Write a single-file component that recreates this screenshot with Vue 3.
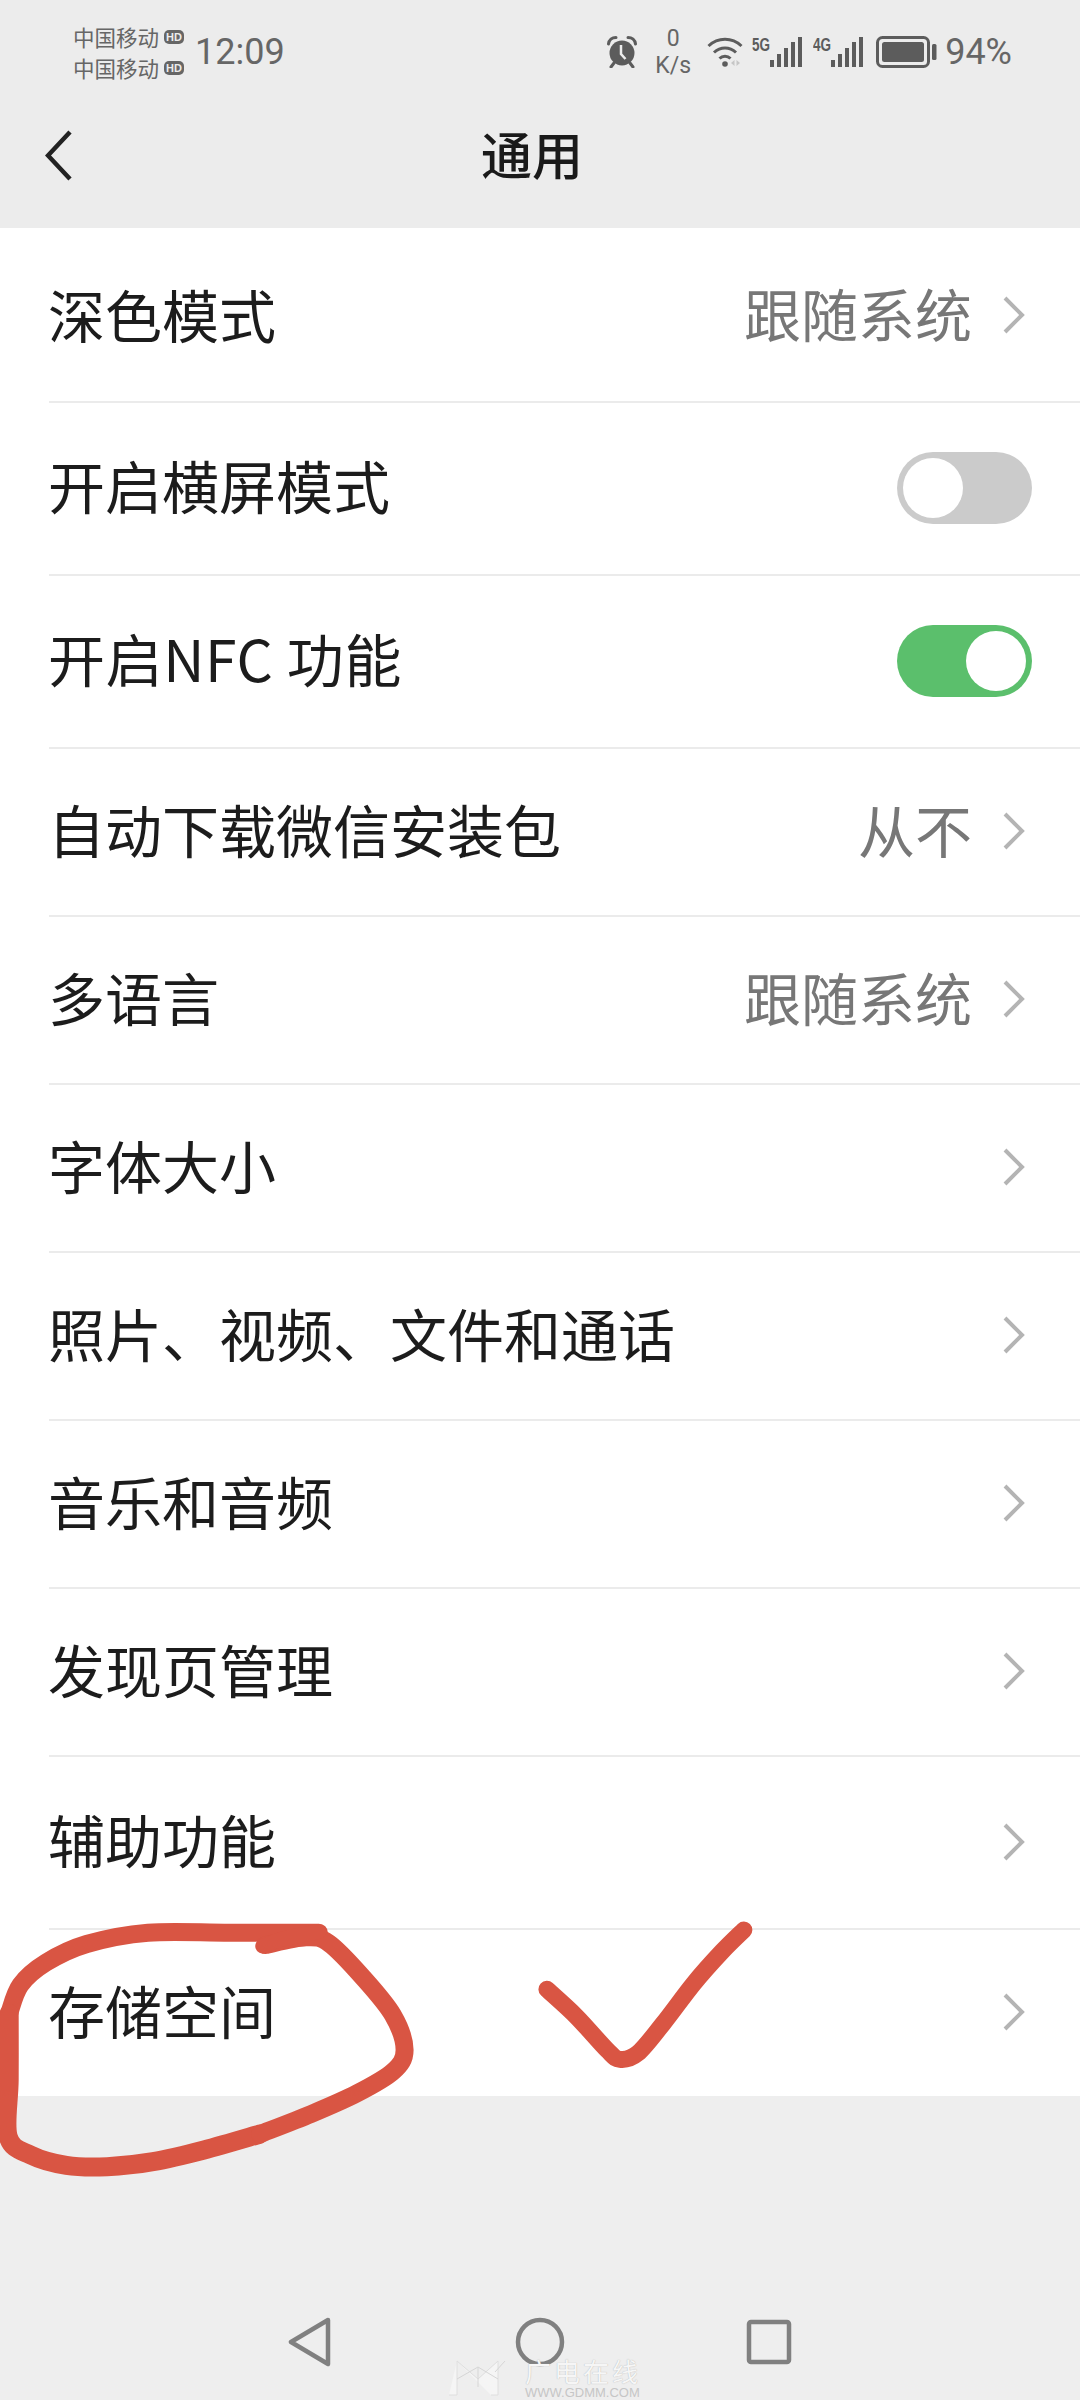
<script setup>
const rows = [
  { label: '深色模式', value: '跟随系统', arrow: true, size: 'tall' },
  { label: '开启横屏模式', toggle: 'off', size: 'tall' },
  { label: '开启NFC 功能', toggle: 'on', size: 'tall nfc' },
  { label: '自动下载微信安装包', value: '从不', arrow: true },
  { label: '多语言', value: '跟随系统', arrow: true },
  { label: '字体大小', arrow: true },
  { label: '照片、视频、文件和通话', arrow: true },
  { label: '音乐和音频', arrow: true },
  { label: '发现页管理', arrow: true },
  { label: '辅助功能', arrow: true, size: 'tall' },
  { label: '存储空间', arrow: true }
]

// Stroke points read off the reference crop, whose axes were scaled 1.96x and 3x.
const toPage = ([x, y]) => [x / 1.96, y / 3 + 1880]

function smooth(raw) {
  const pts = raw.map(toPage)
  let d = `M${pts[0][0]} ${pts[0][1]}`
  for (let i = 0; i < pts.length - 1; i++) {
    const p0 = pts[i - 1] || pts[i]
    const p1 = pts[i]
    const p2 = pts[i + 1]
    const p3 = pts[i + 2] || p2
    const c1x = p1[0] + (p2[0] - p0[0]) / 6
    const c1y = p1[1] + (p2[1] - p0[1]) / 6
    const c2x = p2[0] - (p3[0] - p1[0]) / 6
    const c2y = p2[1] - (p3[1] - p1[1]) / 6
    d += ` C${c1x} ${c1y} ${c2x} ${c2y} ${p2[0]} ${p2[1]}`
  }
  return d
}

const ringTop = smooth([[625, 158], [450, 158], [290, 158], [170, 192], [90, 248], [40, 315], [18, 400]])
const ringLeft = smooth([[18, 400], [18, 600], [16, 770], [60, 825], [130, 856], [210, 860], [300, 845], [400, 810], [510, 762]])
const ringRight = smooth([[510, 762], [610, 702], [700, 640], [770, 575], [793, 510], [770, 405], [710, 290], [645, 190], [600, 172], [520, 195]])
const ringBlob = smooth([[515, 198], [560, 175], [625, 155]])
const tick = smooth([[1072, 328], [1130, 410], [1190, 510], [1215, 538], [1250, 520], [1300, 430], [1360, 310], [1415, 215], [1458, 150]])
</script>

<template>
  <div class="page">
    <header class="head">
      <div class="status">
        <div class="carriers">
          <div class="carrier">中国移动<span class="hd">HD</span></div>
          <div class="carrier">中国移动<span class="hd">HD</span></div>
        </div>
        <div class="time">12:09</div>
        <div class="spacer"></div>
        <svg class="alarm" viewBox="0 0 30 32" width="30" height="32">
          <circle cx="15" cy="17" r="12.500" fill="#5c5c5c" />
          <path d="M1.500 8 C2 4 5 1.500 9 1.500 M28.500 8 C28 4 25 1.500 21 1.500" fill="none" stroke="#5c5c5c" stroke-width="3" stroke-linecap="round" />
          <path d="M7 27 L4 31 M23 27 L26 31" stroke="#5c5c5c" stroke-width="3" stroke-linecap="round" />
          <path d="M14 9 V18 L18.500 23" fill="none" stroke="#ececec" stroke-width="2.500" />
        </svg>
        <div class="speed"><span>0</span><span>K/s</span></div>
        <svg class="wifi" viewBox="0 0 38 32" width="38" height="32">
          <path d="M1.500 10 C11 1 25 1 34.500 10" fill="none" stroke="#5c5c5c" stroke-width="3" />
          <path d="M7 16.500 C13.500 10.500 22.500 10.500 29 16.500" fill="none" stroke="#5c5c5c" stroke-width="3" />
          <path d="M12.500 22.500 C15.500 19.500 20.500 19.500 23.500 22.500" fill="none" stroke="#5c5c5c" stroke-width="3" />
          <circle cx="18" cy="28" r="2.800" fill="#5c5c5c" />
          <path d="M27.500 24 L24 27 L27.500 30 Z M29.500 24 L33 27 L29.500 30 Z" fill="#c6c6c6" />
        </svg>
        <div class="net">
          <span class="gen">5G</span>
          <svg viewBox="0 0 33 32" width="33" height="32">
            <path d="M0 24 h4 v7 h-4 z M7 18 h4 v13 h-4 z M14 12 h4 v19 h-4 z M21 6 h4 v25 h-4 z M28 1 h4 v30 h-4 z" fill="#5c5c5c" />
          </svg>
        </div>
        <div class="net">
          <span class="gen">4G</span>
          <svg viewBox="0 0 33 32" width="33" height="32">
            <path d="M0 24 h4 v7 h-4 z M7 18 h4 v13 h-4 z M14 12 h4 v19 h-4 z M21 6 h4 v25 h-4 z M28 1 h4 v30 h-4 z" fill="#5c5c5c" />
          </svg>
        </div>
        <svg class="battery" viewBox="0 0 61 32" width="61" height="32">
          <rect x="1.500" y="1.500" width="51" height="29" rx="5" fill="none" stroke="#5c5c5c" stroke-width="3" />
          <rect x="6" y="6" width="42" height="20" rx="2.500" fill="#5c5c5c" />
          <rect x="56" y="8" width="4.500" height="16" rx="1.500" fill="#5c5c5c" />
        </svg>
        <div class="pct">94%</div>
      </div>
      <nav class="nav">
        <svg class="back" viewBox="0 0 30 56" width="30" height="56">
          <path d="M25 3 L3 26.500 L25 50" fill="none" stroke="#222" stroke-width="4.500" />
        </svg>
        <h1 class="title">通用</h1>
      </nav>
    </header>

    <main class="list">
      <div v-for="row in rows" :key="row.label" class="row" :class="row.size">
        <span class="label">{{ row.label }}</span>
        <span v-if="row.value" class="value">{{ row.value }}</span>
        <svg v-if="row.arrow" class="arrow" viewBox="0 0 24 40" width="24" height="40">
          <path d="M3 3 L20 20 L3 37" fill="none" stroke="#b4b4b4" stroke-width="4" />
        </svg>
        <span v-if="row.toggle" class="toggle" :class="row.toggle"><i class="knob"></i></span>
      </div>
    </main>

    <footer class="foot">
      <svg class="nav-back" viewBox="0 0 44 52" width="44" height="52">
        <path d="M40 4 L3 26 L40 48 Z" fill="none" stroke="#808080" stroke-width="4.500" stroke-linejoin="round" />
      </svg>
      <svg class="nav-home" viewBox="0 0 52 52" width="52" height="52">
        <circle cx="26" cy="26" r="22" fill="none" stroke="#808080" stroke-width="4.500" />
      </svg>
      <svg class="nav-recent" viewBox="0 0 48 52" width="48" height="52">
        <rect x="4" y="6" width="40" height="40" rx="2" fill="none" stroke="#808080" stroke-width="4.500" />
      </svg>
    </footer>

    <div class="mark">
      <svg class="mark-logo" viewBox="0 0 66 36" width="66" height="36">
        <path d="M14 1 L35 19 L55 1 V35 H48 M14 1 V35 H6" fill="#f5f5f5" stroke="#dedede" stroke-width="1" />
        <path d="M14 19 L35 7 L55 19 M35 7 V27 M62 1 L52 12" fill="none" stroke="#d6d6d6" stroke-width="1" />
      </svg>
      <div class="mark-text">
        <div class="mark-cn">广电在线</div>
        <div class="mark-en">WWW.GDMM.COM</div>
      </div>
    </div>

    <svg class="scribble" viewBox="0 0 1080 2400" width="1080" height="2400">
      <g fill="none" stroke="#d95543" stroke-linecap="round" stroke-linejoin="round">
        <path :d="ringTop" stroke-width="18" />
        <path :d="ringLeft" stroke-width="19" />
        <path :d="ringRight" stroke-width="18" />
        <path :d="ringBlob" stroke-width="15" />
        <path :d="tick" stroke-width="17" />
      </g>
    </svg>
  </div>
</template>

<style scoped>
.page {
  position: relative;
  width: 1080px;
  height: 2400px;
  overflow: hidden;
  background: #ececec;
  font-family: "Noto Sans CJK SC", "Noto Sans", sans-serif;
  display: flex;
  flex-direction: column;
}
.head { height: 228px; flex: none; }
.status {
  height: 84px;
  padding: 20px 68px 0 73px;
  box-sizing: border-box;
  display: flex;
  align-items: center;
  color: #5c5c5c;
}
.carriers { width: 122px; }
.carrier {
  font-size: 21.500px;
  line-height: 31px;
  display: flex;
  align-items: center;
  color: #666;
  white-space: nowrap;
}
.hd {
  margin-left: 5px;
  width: 20px;
  height: 14px;
  border-radius: 5px;
  background: #666;
  color: #ececec;
  font: 700 11px/14px "Liberation Sans", sans-serif;
  text-align: center;
}
.time {
  font: 400 36px/44px Roboto, sans-serif;
  color: #666;
}
.spacer { flex: 1; }
.speed {
  width: 38px;
  margin-left: 17px;
  display: flex;
  flex-direction: column;
  align-items: center;
  font: 400 23px/27px Roboto, sans-serif;
  color: #666;
}
.wifi { margin-left: 15px; }
.net { display: flex; align-items: flex-start; height: 32px; margin-left: 7px; }
.net + .net { margin-left: 10px; }
.gen {
  font: 700 18px/18px "Liberation Sans", sans-serif;
  width: 18px;
  transform: scaleX(.75);
  transform-origin: left;
  white-space: nowrap;
}
.battery { margin-left: 12px; }
.pct {
  margin-left: 8px;
  font: 400 36px/44px Roboto, sans-serif;
  color: #666;
}
.nav {
  position: relative;
  height: 144px;
  padding-right: 16px;
  display: flex;
  align-items: center;
  justify-content: center;
}
.back { position: absolute; left: 45px; top: 45px; }
.title {
  margin: 0 0 6px;
  font-size: 51px;
  font-weight: 500;
  line-height: 1;
  color: #1a1a1a;
}
.list { background: #fff; flex: none; }
.row {
  position: relative;
  display: flex;
  align-items: center;
  height: 168px;
  padding: 0 48px;
  box-sizing: border-box;
}
.row.tall { height: 173px; }
.row + .row::before {
  content: "";
  position: absolute;
  left: 49px;
  right: 0;
  top: 0;
  height: 2px;
  background: #ebebeb;
}
.label {
  flex: 1;
  margin-top: -6px;
  font-size: 57px;
  line-height: 1.2;
  color: #1c1c1c;
  white-space: nowrap;
}
.value {
  margin: -6px 30px 0 0;
  font-size: 57px;
  line-height: 1.2;
  color: #777;
  white-space: nowrap;
}
.row:first-child .label { margin-top: -2px; }
.row:first-child .value { margin-top: -4px; }
.nfc .label { letter-spacing: .6px; }
.arrow { flex: none; margin-right: 6px; }
.toggle {
  position: relative;
  width: 135px;
  height: 72px;
  border-radius: 36px;
  background: #cbcbcb;
  flex: none;
}
.toggle.on { background: #5bbf6c; }
.knob {
  position: absolute;
  top: 6px;
  left: 6px;
  width: 60px;
  height: 60px;
  border-radius: 50%;
  background: #fff;
}
.toggle.on .knob { left: 69px; }
.foot {
  flex: 1;
  display: flex;
  align-items: flex-start;
  padding: 220px 0 0 288px;
  background: #eee;
}
.nav-home { margin-left: 182px; }
.nav-recent { margin-left: 179px; }
.mark {
  position: absolute;
  left: 443px;
  top: 2356px;
  display: flex;
  gap: 16px;
}
.mark-logo { margin-top: 4px; }
.mark-text { width: 116px; }
.mark-cn {
  font-size: 26px;
  line-height: 30px;
  letter-spacing: 3px;
  color: #f6f6f6;
  text-shadow: 0 0 1px #a8a8a8;
  white-space: nowrap;
}
.mark-en {
  font: 400 13px/14px "Liberation Sans", sans-serif;
  color: #c6c6c6;
  white-space: nowrap;
}
.scribble { position: absolute; left: 0; top: 0; pointer-events: none; }
</style>
